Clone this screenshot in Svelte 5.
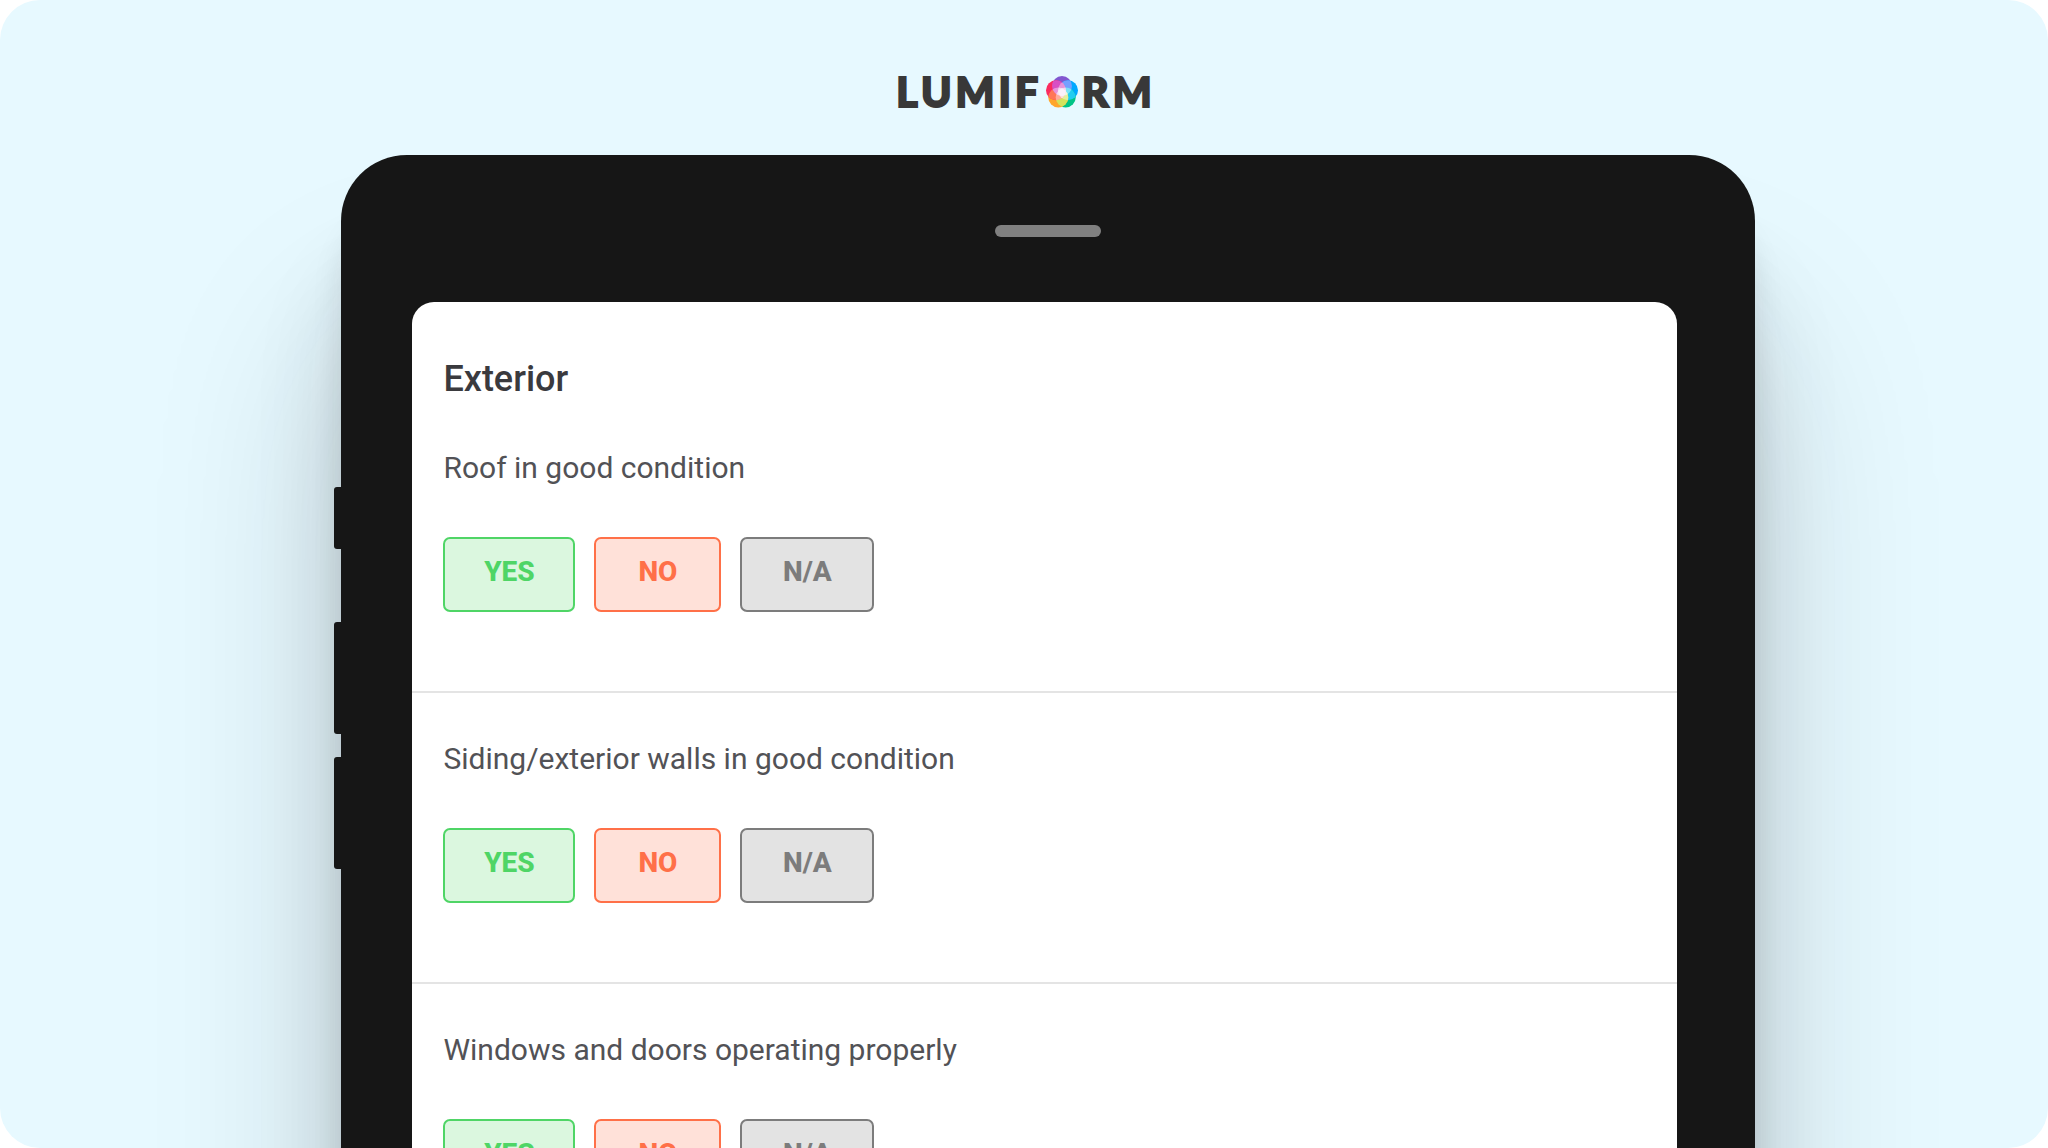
<script lang="ts">
  type Answer = 'yes' | 'no' | 'na';

  const ANSWERS: { value: Answer; label: string }[] = [
    { value: 'yes', label: 'YES' },
    { value: 'no', label: 'NO' },
    { value: 'na', label: 'N/A' },
  ];

  // five petals of the logo mark, clockwise from the top;
  // blend is the colour where a petal overlaps the next one
  const PETALS = [
    { cx: 16, cy: 10, fill: '#8257d0', blend: '#75a0ff' },
    { cx: 22, cy: 14.3, fill: '#00a8ff', blend: '#22cdf0' },
    { cx: 19.7, cy: 21.5, fill: '#00c486', blend: '#d3e35c' },
    { cx: 12.3, cy: 21.5, fill: '#ffa62b', blend: '#ff7657' },
    { cx: 10, cy: 14.3, fill: '#fa2b5f', blend: '#d84fc4' },
  ];

  const questions = [
    'Roof in good condition',
    'Siding/exterior walls in good condition',
    'Windows and doors operating properly',
  ];

  let answers = $state<Record<number, Answer>>({});

  function pick(index: number, value: Answer) {
    answers[index] = value;
  }
</script>

<main class="page">
  <header class="logo" aria-label="Lumiform">
    <span>LUMIF</span>
    <svg class="logo-mark" width="32" height="32" viewBox="0 0 32 32" aria-hidden="true">
      {#each PETALS as petal, i}
        <clipPath id="petal-{i}"><circle cx={petal.cx} cy={petal.cy} r="10" /></clipPath>
        <circle cx={petal.cx} cy={petal.cy} r="10" fill={petal.fill} />
      {/each}
      {#each PETALS as petal, i}
        {@const next = PETALS[(i + 1) % 5]}
        <circle cx={next.cx} cy={next.cy} r="10" fill={petal.blend} clip-path="url(#petal-{i})" />
      {/each}
      {#each PETALS as _, i}
        {@const far = PETALS[(i + 2) % 5]}
        <circle cx={far.cx} cy={far.cy} r="10" fill="#fff" opacity="0.4" clip-path="url(#petal-{i})" />
      {/each}
    </svg>
    <span>RM</span>
  </header>

  <div class="tablet">
    <div class="side-keys" aria-hidden="true">
      <span class="key key-short"></span>
      <span class="key"></span>
      <span class="key"></span>
    </div>
    <div class="speaker"></div>

    <section class="screen">
      <h1>Exterior</h1>
      {#each questions as question, i (question)}
        <div class="question" role="group" aria-labelledby="question-{i}">
          <p id="question-{i}">{question}</p>
          <div class="answers">
            {#each ANSWERS as answer (answer.value)}
              <button
                type="button"
                class="answer {answer.value}"
                aria-pressed={answers[i] === answer.value}
                onclick={() => pick(i, answer.value)}
              >
                {answer.label}
              </button>
            {/each}
          </div>
        </div>
      {/each}
    </section>
  </div>
</main>

<style>
  :global(body) {
    margin: 0;
    background: #fff;
  }
  .page {
    box-sizing: border-box;
    height: 100vh;
    padding-top: 64px;
    overflow: hidden;
    background: #e7f9ff;
    border-radius: 40px;
    font-family: Roboto, "Liberation Sans", sans-serif;
  }

  .logo {
    display: flex;
    align-items: center;
    justify-content: center;
    gap: 4px;
    height: 56px;
    margin-bottom: 35px;
    padding-left: 4px;
    color: #383838;
    font-family: Lato, "Open Sans", sans-serif;
    font-size: 41px;
    font-weight: 900;
    line-height: 56px;
    letter-spacing: 4px;
    -webkit-text-stroke: 2px #383838;
  }
  .logo-mark {
    flex: none;
  }

  .tablet {
    position: relative;
    box-sizing: border-box;
    width: 69%;
    margin: 0 auto;
    left: 24px;
    padding: 70px 0 140px;
    background: #161616;
    border-radius: 66px;
    box-shadow:
      0 60px 30px rgba(30, 30, 34, 0.1),
      0 120px 90px rgba(30, 30, 34, 0.12),
      0 180px 190px rgba(30, 30, 34, 0.18);
  }
  .side-keys {
    position: absolute;
    top: 332px;
    left: -7px;
    display: flex;
    flex-direction: column;
    gap: 23px;
  }
  .key {
    width: 8px;
    height: 112px;
    background: #161616;
    border-radius: 3px 0 0 3px;
  }
  .key-short {
    height: 62px;
    margin-bottom: 50px;
  }
  .speaker {
    width: 106px;
    height: 12px;
    margin: 0 auto 65px;
    background: #808080;
    border-radius: 6px;
  }

  .screen {
    margin: 0 78px 0 71px;
    padding-top: 55px;
    background: #fff;
    border-radius: 22px;
  }
  h1 {
    margin: 0 0 1px;
    padding: 0 31px;
    color: #3a3a3e;
    font-size: 36px;
    font-weight: 500;
    line-height: 44px;
  }
  .question {
    padding: 48px 31px 79px;
    border-bottom: 2px solid #e4e4e4;
  }
  .question:last-child {
    border-bottom: 0;
  }
  p {
    margin: 0 0 51px;
    color: #525256;
    font-size: 30px;
    line-height: 36px;
  }
  .answers {
    display: flex;
    gap: 19px;
  }
  .answer {
    box-sizing: border-box;
    height: 75px;
    padding: 0 0 6px;
    border: 2px solid;
    border-radius: 7px;
    font: inherit;
    font-size: 28px;
    font-weight: 800;
    cursor: pointer;
  }
  .yes {
    width: 132px;
    background: #dbf7df;
    color: #4fd566;
  }
  .no {
    width: 127px;
    background: #ffe1d9;
    color: #ff7048;
  }
  .na {
    width: 134px;
    background: #e3e3e3;
    color: #7c7c7c;
  }
</style>
